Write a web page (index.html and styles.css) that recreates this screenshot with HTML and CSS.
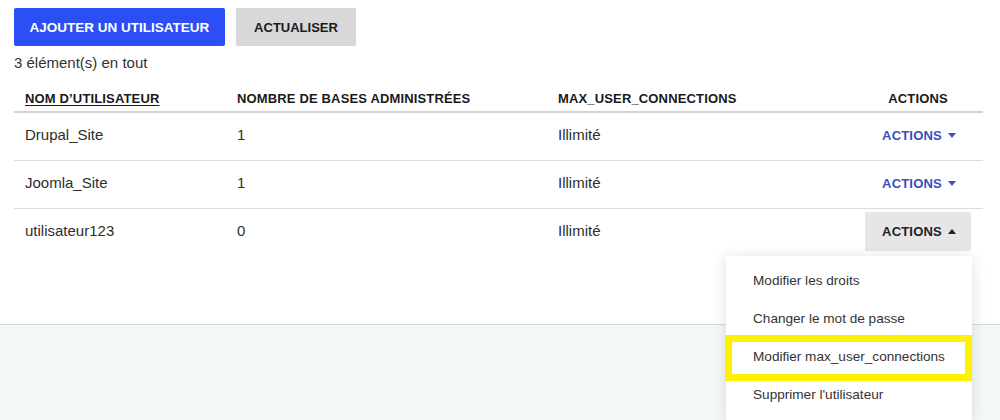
FILE: index.html
```html
<!DOCTYPE html>
<html lang="fr">
<head>
<meta charset="utf-8">
<title>Utilisateurs</title>
<link rel="stylesheet" href="styles.css">
</head>
<body>
<div class="page">
  <section class="panel">
    <div class="toolbar">
      <button class="btn btn-primary">AJOUTER UN UTILISATEUR</button>
      <button class="btn btn-grey">ACTUALISER</button>
    </div>
    <div class="count">3 élément(s) en tout</div>
    <div class="table">
      <div class="row head">
        <div class="cell"><span class="sort">NOM D’UTILISATEUR</span></div>
        <div class="cell">NOMBRE DE BASES ADMINISTRÉES</div>
        <div class="cell">MAX_USER_CONNECTIONS</div>
        <div class="cell c-head">ACTIONS</div>
      </div>
      <div class="row">
        <div class="cell">Drupal_Site</div>
        <div class="cell">1</div>
        <div class="cell">Illimité</div>
        <div class="cell c-act">
          <button class="act">ACTIONS <svg class="caret" width="8" height="5" viewBox="0 0 8 5"><path d="M0 0h8L4 5z" fill="currentColor"/></svg></button>
        </div>
      </div>
      <div class="row">
        <div class="cell">Joomla_Site</div>
        <div class="cell">1</div>
        <div class="cell">Illimité</div>
        <div class="cell c-act">
          <button class="act">ACTIONS <svg class="caret" width="8" height="5" viewBox="0 0 8 5"><path d="M0 0h8L4 5z" fill="currentColor"/></svg></button>
        </div>
      </div>
      <div class="row last">
        <div class="cell">utilisateur123</div>
        <div class="cell">0</div>
        <div class="cell">Illimité</div>
        <div class="cell c-act">
          <div class="menu-wrap">
            <button class="act open">ACTIONS <svg class="caret" width="8" height="5" viewBox="0 0 8 5"><path d="M0 5h8L4 0z" fill="currentColor"/></svg></button>
            <ul class="menu">
              <li>Modifier les droits</li>
              <li>Changer le mot de passe</li>
              <li class="marked">Modifier max_user_connections</li>
              <li>Supprimer l'utilisateur</li>
            </ul>
          </div>
        </div>
      </div>
    </div>
  </section>
</div>
</body>
</html>
```
FILE: styles.css
```css
* { box-sizing: border-box; }
html, body { margin: 0; padding: 0; }
body {
  font-family: "Liberation Sans", Arial, sans-serif;
  color: #2e2e2e;
  background: #f5f8f9;
}
.page {
  height: 420px;
  overflow: hidden;
}
.panel {
  background: #fff;
  height: 325px;
  border-bottom: 1px solid #d7d9da;
  padding: 8px 17px 0 14px;
}
.toolbar {
  display: flex;
  gap: 11px;
}
.btn {
  height: 38px;
  border: 0;
  border-radius: 2px;
  font-family: inherit;
  font-weight: bold;
  font-size: 13px;
  padding: 0;
  cursor: pointer;
}
.btn-primary {
  width: 211px;
  background: #2b4ff5;
  color: #fff;
  font-size: 13.5px;
}
.btn-grey {
  width: 120px;
  background: #d8d7d9;
  color: #1b1b1b;
}
.count {
  margin-top: 7px;
  font-size: 15px;
  line-height: 20px;
  color: #333;
}
.table {
  width: 969px;
}
.row {
  display: grid;
  grid-template-columns: 212px 321px 306px 130px;
  border-bottom: 1px solid #dcdcdc;
  font-size: 15px;
  line-height: 20px;
}
.row .cell {
  padding: 12px 11px 15px;
}
.row.head {
  border-bottom: 2px solid #d2d2d2;
  font-size: 13px;
  font-weight: bold;
  line-height: 16px;
  color: #1a1a1a;
  letter-spacing: 0.15px;
}
.row.head .cell {
  padding: 18px 11px 4px;
}
.row.head .c-head {
  text-align: center;
  padding-left: 0;
  padding-right: 0;
}
.row.last {
  border-bottom: 0;
}
.sort {
  text-decoration: underline;
  text-underline-offset: 2px;
}
.row .c-act {
  padding: 3px 0 5px;
  display: flex;
  justify-content: center;
  align-items: flex-start;
}
.menu-wrap {
  position: relative;
}
.act {
  display: flex;
  align-items: center;
  justify-content: center;
  gap: 6px;
  width: 106px;
  height: 39px;
  margin: 0;
  border: 0;
  background: transparent;
  color: #3a4fbf;
  font-family: inherit;
  font-weight: bold;
  font-size: 13px;
  letter-spacing: 0.2px;
  padding: 0 0 0 2px;
  cursor: pointer;
}
.act.open {
  background: #e6e5e8;
  color: #222;
}
.caret { display: block; }
.menu {
  position: absolute;
  top: calc(100% + 5px);
  right: -1px;
  width: 246px;
  margin: 0;
  padding: 6px 0;
  list-style: none;
  background: #fff;
  box-shadow: 0 2px 14px rgba(0, 0, 0, 0.13);
  text-align: left;
  z-index: 2;
}
.menu li {
  position: relative;
  height: 38px;
  line-height: 38px;
  padding-left: 27px;
  font-size: 13.6px;
  font-weight: normal;
  color: #333;
  letter-spacing: 0;
}
.menu li.marked::after {
  content: "";
  position: absolute;
  top: -3px;
  bottom: -5px;
  left: -1px;
  right: 0;
  border: 7px solid #fff200;
  pointer-events: none;
}
```
